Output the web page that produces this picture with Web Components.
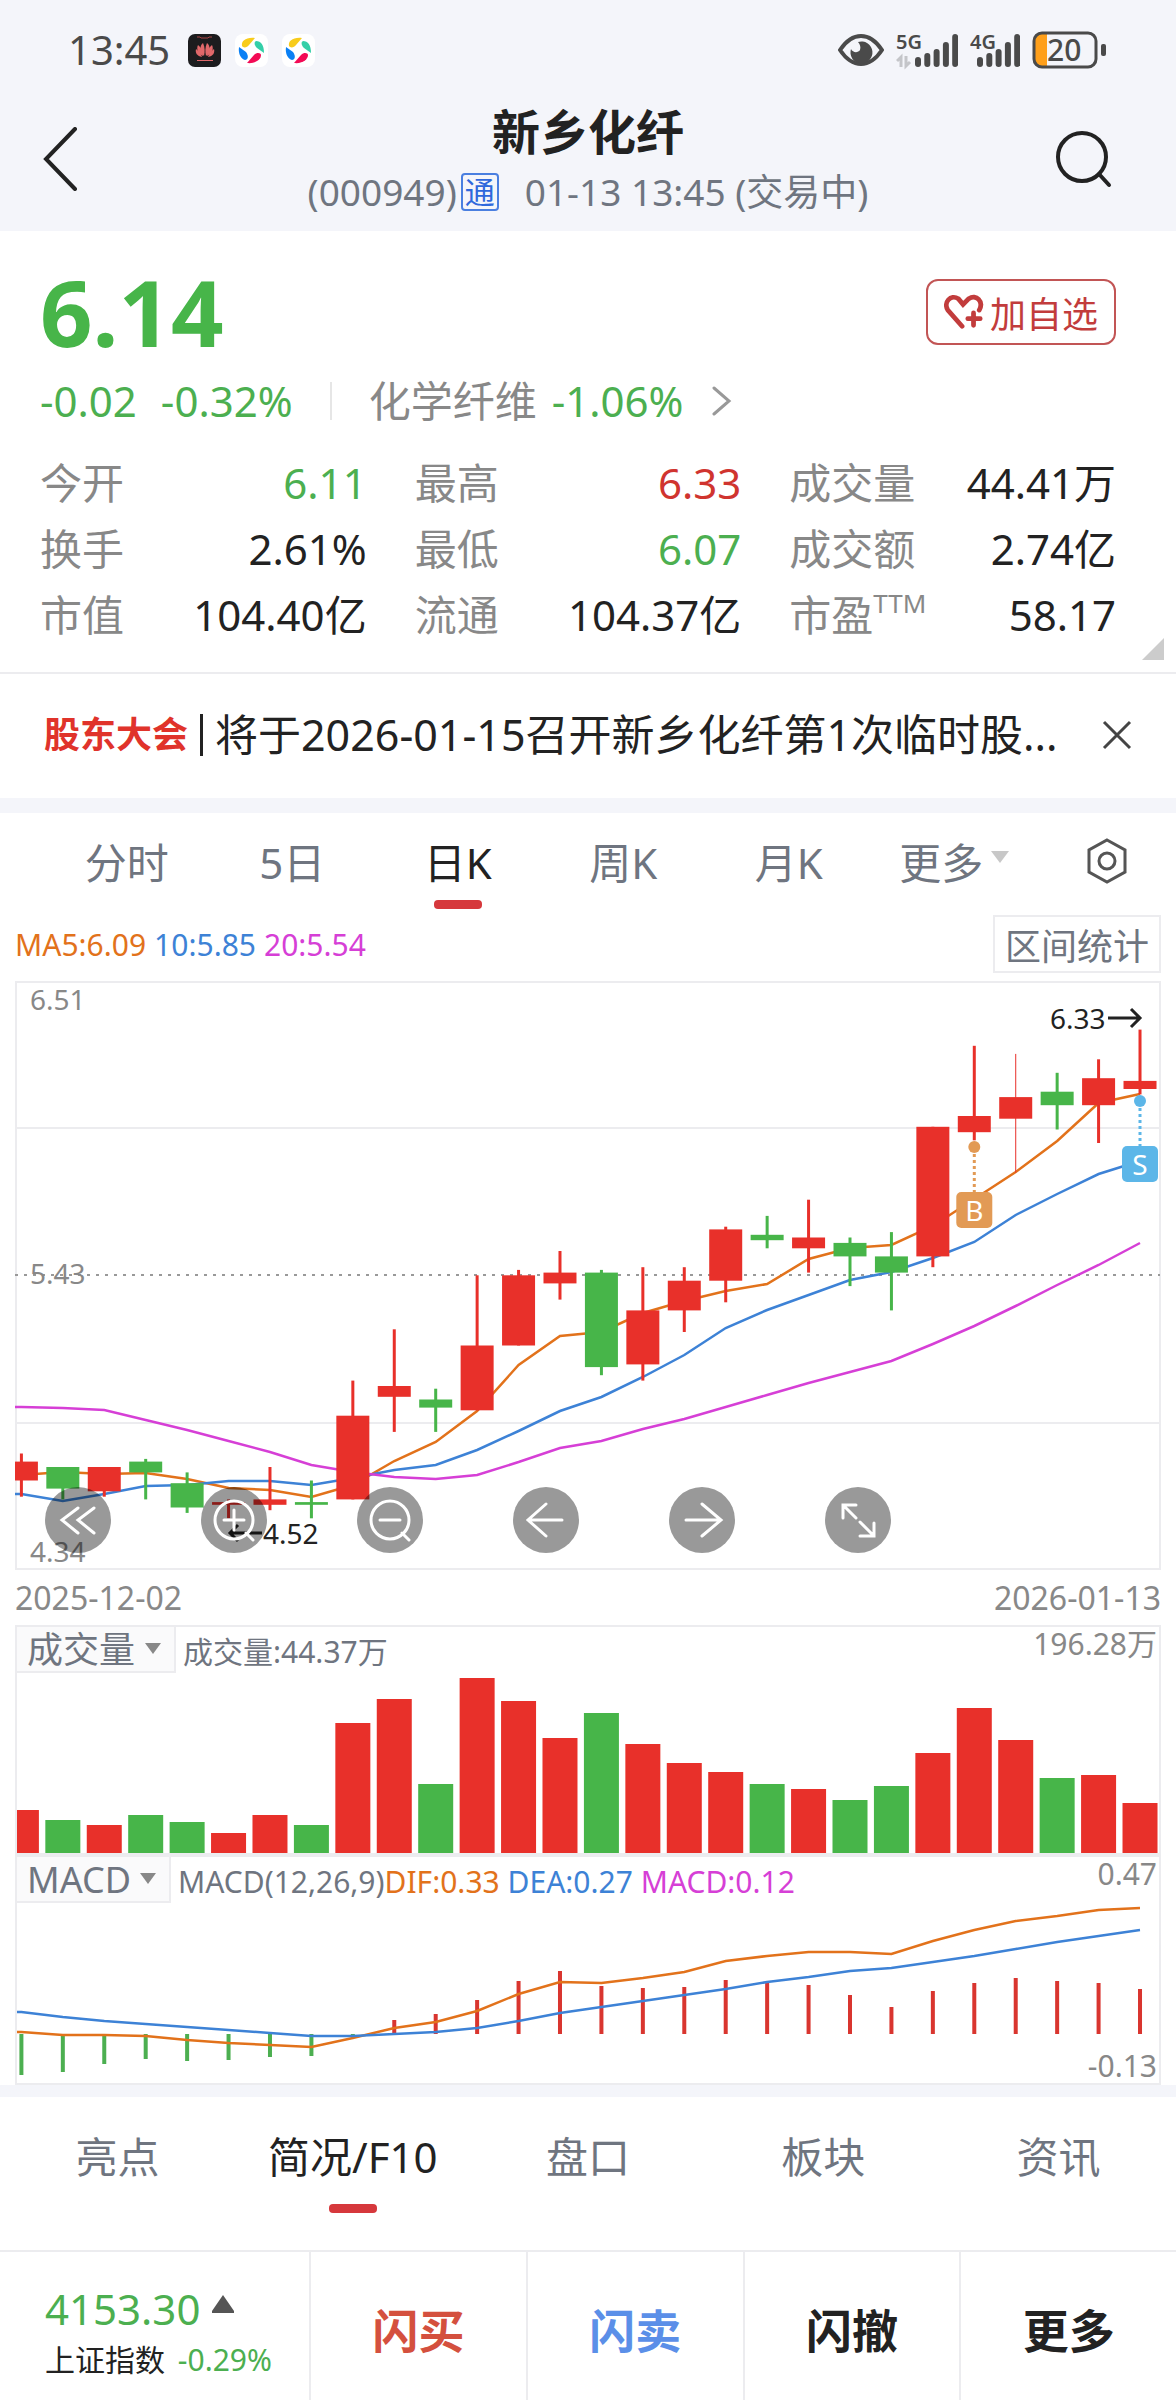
<!DOCTYPE html>
<html lang="zh-CN">
<head>
<meta charset="utf-8">
<meta name="viewport" content="width=device-width, initial-scale=1">
<title>新乡化纤 (000949)</title>
<style>
    :root {
        --ink: #222;
        --grey: #888;
        --slate: #6f7580;
        --line: #ececef;
        --band: #f4f5fa;
        --up: #e8302a;
        --down: #47b549;
        --ma5: #e2721b;
        --ma10: #3d82d6;
        --ma20: #d63fd6;
    }

    body {
        margin: 0;
        background: #fff;
        color: var(--ink);
        font-family: "Noto Sans", "Noto Sans CJK SC", sans-serif;
    }
</style>
</head>
<body>
<stock-page></stock-page>

<script>
const RESET = `
    *, *::before, *::after { box-sizing: border-box; }
    button, select { margin: 0; padding: 0; border: 0; background: none; color: inherit; font: inherit; }
    a { color: inherit; text-decoration: none; }
    svg { display: block; flex: none; }
`;

/**
 * Shared base: opens the shadow root and fills it with styles and markup.
 */
class BaseElement extends HTMLElement {
    constructor() {
        super();
        this.attachShadow({ mode: 'open' });
    }

    connectedCallback() {
        this.shadowRoot.innerHTML = `<style>${RESET}${this.styles}</style>${this.template}`;
    }
}

/**
 * System status bar: clock, running apps, signal and battery.
 */
class StatusBar extends BaseElement {
    bars(x) {
        return [10, 14, 18, 25, 33].map((h, i) =>
            `<rect x="${x + i * 9.3}" y="${34 - h}" width="6" height="${h}" rx="3"/>`).join('');
    }

    get browserIcon() {
        return `
            <svg width="33" height="33" viewBox="0 0 33 33">
                <rect width="33" height="33" rx="8" fill="#fff"/>
                <path fill="#f8cc1b" d="M7 12 C6 7 11 3 20 4 L14 11 C12 14 8 14 7 12Z"/>
                <path fill="#34cfa8" d="M21 7 C26 7 29 11 29 19 L22 14 C19 11 19 8 21 7Z"/>
                <path fill="#0a80f5" d="M4 13 L11 18 C14 22 13 26 10 26 C6 25 3 20 4 13Z"/>
                <path fill="#f30b55" d="M12 29 L19 21 C22 18 26 19 26 21 C26 25 21 30 12 29Z"/>
            </svg>`;
    }

    get template() {
        return `
            <time>13:45</time>
            <div class="apps">
                <svg width="33" height="33" viewBox="0 0 33 33">
                    <rect width="33" height="33" rx="7" fill="#1c1c1e"/>
                    <path d="M9 3h3l1 1h7l1-1h3" fill="none" stroke="#a44" stroke-width="1"/>
                    <g fill="#e0686a">
                        <path d="M16 22C12 18 11 12 15 9C17 13 17 18 16 22Z"/>
                        <path d="M18 22C22 18 23 12 19 9C17 13 17 18 18 22Z"/>
                        <path d="M15 22C10 20 8 15 10 11C13 13 15 18 15 22Z"/>
                        <path d="M19 22C24 20 26 15 24 11C21 13 19 18 19 22Z"/>
                        <path d="M14 23C9 22 7 19 8 15C11 17 13 20 14 23Z"/>
                        <path d="M20 23C25 22 27 19 26 15C23 17 21 20 20 23Z"/>
                        <path d="M9 26h16v1h-16z"/>
                    </g>
                </svg>
                ${this.browserIcon}
                ${this.browserIcon}
            </div>
            <svg width="46" height="34" viewBox="0 0 46 34">
                <path d="M2 17C8 8 15 3 23 3C31 3 38 8 44 17C38 26 31 31 23 31C15 31 8 26 2 17Z" fill="none" stroke="#4a4a4a" stroke-width="4"/>
                <path d="M20 9A11 11 0 1 1 13 16C15 20 20 20 22 17C23 14 22 11 20 9Z" fill="#4a4a4a"/>
            </svg>
            <svg class="net" width="62" height="50" viewBox="0 -8 62 50">
                <text x="0" y="16">5G</text>
                <g fill="#4a4a4a">${this.bars(19)}</g>
                <path d="M1 28l4-4v10" fill="none" stroke="#c4c5c9" stroke-width="3"/>
                <path d="M10 23v10l4-4" fill="none" stroke="#c4c5c9" stroke-width="3"/>
            </svg>
            <svg class="net" width="50" height="50" viewBox="0 -8 50 50">
                <text x="0" y="16">4G</text>
                <g fill="#4a4a4a">${this.bars(7)}</g>
            </svg>
            <svg class="battery" width="74" height="54" viewBox="0 -8 74 54">
                <path d="M10 2h5v34h-5a8 8 0 0 1-8-8v-18a8 8 0 0 1 8-8z" fill="#ff9f1a"/>
                <rect x="2" y="2" width="62" height="34" rx="8" fill="none" stroke="#4a4a4a" stroke-width="3"/>
                <rect x="69" y="13" width="5" height="12" rx="2" fill="#4a4a4a"/>
                <text x="15" y="30">20</text>
            </svg>
        `;
    }

    get styles() {
        return `
            :host {
                display: flex;
                align-items: center;
                gap: 12px;
                height: 100px;
                padding: 0 70px 0 68px;
                color: #4a4a4a;
            }
            time { font-size: 40px; line-height: 60px; }
            .apps { flex: 1; display: flex; gap: 14px; padding-left: 6px; }
            text { fill: #4a4a4a; font-weight: 500; }
            .net text { font-size: 20px; font-weight: 600; }
            .battery text { font-size: 30px; }
        `;
    }
}
customElements.define('status-bar', StatusBar);

/**
 * Title bar with back and search buttons; the name and code lines are slotted.
 */
class StockHeader extends BaseElement {
    get template() {
        return `
            <button aria-label="返回">
                <svg width="40" height="64" viewBox="0 0 40 64"><path d="M33 2L4 32L33 62"/></svg>
            </button>
            <div class="titles">
                <h1><slot name="name"></slot></h1>
                <p><span><slot name="code"></slot><b>通</b></span><slot name="time"></slot></p>
            </div>
            <button aria-label="搜索">
                <svg width="60" height="60" viewBox="0 0 60 60"><circle cx="28" cy="28" r="24"/><path d="M45 45L55 56"/></svg>
            </button>
        `;
    }

    get styles() {
        return `
            :host {
                display: flex;
                align-items: center;
                justify-content: space-between;
                padding: 2px 42px 9px;
            }
            button { width: 80px; padding-bottom: 6px; }
            path, circle { fill: none; stroke: var(--ink); stroke-width: 4; stroke-linecap: round; }
            .titles { text-align: center; }
            h1 { margin: 0; font-size: 48px; line-height: 60px; }
            p {
                display: flex;
                justify-content: center;
                gap: 26px;
                margin: 0;
                color: var(--slate);
                font-size: 37px;
                line-height: 60px;
            }
            p span { display: flex; align-items: center; gap: 4px; }
            b {
                width: 38px;
                border: 2px solid #4a7fe0;
                border-radius: 4px;
                color: #2f68dc;
                font-size: 30px;
                font-weight: 400;
                line-height: 34px;
            }
        `;
    }
}
customElements.define('stock-header', StockHeader);

/**
 * One label / value pair of the quote grid.
 */
class QuoteItem extends BaseElement {
    get template() {
        return `<span class="label">${this.getAttribute('label')}<sup>${this.getAttribute('note') || ''}</sup></span><slot></slot>`;
    }

    get styles() {
        return `
            :host {
                display: flex;
                justify-content: space-between;
                font-size: 42px;
                line-height: 66px;
            }
            :host([trend="up"]) { color: #d0342f; }
            :host([trend="down"]) { color: #4caf50; }
            .label { display: flex; color: var(--grey); }
            sup { font-size: 26px; line-height: 42px; vertical-align: baseline; }
        `;
    }
}
customElements.define('quote-item', QuoteItem);

/**
 * Latest price, change, industry and the slotted quote grid.
 */
class StockQuote extends BaseElement {
    get template() {
        return `
            <div class="top">
                <strong>6.14</strong>
                <button>
                    <svg width="40" height="36" viewBox="0 0 42 36">
                        <path d="M19 33L4 16C-1 8 7 -1 15 4L20 10L26 4C34 -1 42 7 37 16M31 19v13M25 25h13"/>
                    </svg>加自选
                </button>
            </div>
            <div class="change">
                <span>-0.02</span><span>-0.32%</span><i></i>
                <a href="#industry"><em>化学纤维</em> -1.06%
                    <svg width="20" height="32" viewBox="0 0 20 32"><path d="M2 3L17 16L2 29"/></svg>
                </a>
            </div>
            <div class="grid"><slot></slot></div>
            <svg class="corner" width="22" height="22" viewBox="0 0 22 22"><path d="M22 0V22H0Z"/></svg>
        `;
    }

    get styles() {
        return `
            :host {
                display: block;
                position: relative;
                padding: 30px 60px 24px 40px;
                border-bottom: 2px solid var(--line);
                background: #fff;
            }
            .top { display: flex; align-items: center; justify-content: space-between; }
            strong { color: var(--down); font-size: 92px; line-height: 102px; }
            button {
                display: flex;
                align-items: center;
                gap: 6px;
                height: 66px;
                padding: 0 16px;
                border: 2px solid #c25555;
                border-radius: 12px;
                color: #c23c3c;
                font-size: 36px;
            }
            button path { fill: none; stroke: #c23c3c; stroke-width: 5; stroke-linecap: round; }
            .change {
                display: flex;
                align-items: center;
                gap: 24px;
                height: 76px;
                color: #4caf50;
                font-size: 42px;
                line-height: 60px;
            }
            i { width: 2px; height: 38px; margin: 0 13px; background: #e6e6e6; }
            a { display: flex; align-items: center; gap: 15px; }
            a path { fill: none; stroke: #999; stroke-width: 3; stroke-linecap: round; }
            a svg { margin-left: 14px; }
            em { color: var(--grey); font-style: normal; }
            .grid {
                display: grid;
                grid-template-columns: repeat(3, 1fr);
                column-gap: 48px;
                padding-top: 11px;
            }
            .corner { position: absolute; right: 12px; bottom: 12px; fill: #ccc; }
        `;
    }
}
customElements.define('stock-quote', StockQuote);

class NoticeBar extends BaseElement {
    get template() {
        return `
            <b><slot name="tag"></slot></b>
            <a href="#notice"><slot></slot></a>
            <button aria-label="关闭">
                <svg width="30" height="30" viewBox="0 0 30 30"><path d="M2 2L28 28M28 2L2 28" stroke="#444" stroke-width="3"/></svg>
            </button>
        `;
    }

    get styles() {
        return `
            :host {
                display: flex;
                align-items: center;
                height: 124px;
                padding: 0 44px 2px;
                background: #fff;
            }
            b { padding-right: 12px; color: #e0332b; font-size: 36px; line-height: 42px; }
            a {
                flex: 1;
                padding-left: 12px;
                border-left: 3px solid var(--ink);
                font-size: 43px;
                line-height: 42px;
                white-space: nowrap;
            }
            button { height: 30px; }
        `;
    }
}
customElements.define('notice-bar', NoticeBar);

/**
 * A tab; the active one gets the red bar, "menu" adds a small triangle.
 */
class TabItem extends BaseElement {
    get template() {
        const menu = this.hasAttribute('menu')
            ? '<svg width="18" height="12" viewBox="0 0 18 12"><path d="M0 0H18L9 12Z" fill="#c8c8c8"/></svg>' : '';
        return `<button role="tab" aria-selected="${this.hasAttribute('active')}"><slot></slot>${menu}</button>`;
    }

    get styles() {
        return `
            :host { flex: 1; display: flex; justify-content: center; color: var(--slate); font-size: 42px; }
            :host([active]) { color: var(--ink); }
            button {
                display: flex;
                align-items: center;
                gap: 8px;
                position: relative;
                line-height: 60px;
                white-space: nowrap;
            }
            :host([active]) button::after {
                content: "";
                position: absolute;
                left: calc(50% - 24px);
                bottom: 4px;
                width: 48px;
                height: 9px;
                border-radius: 4px;
                background: #d6383c;
            }
            svg { margin-bottom: 12px; }
        `;
    }
}
customElements.define('tab-item', TabItem);

const STEP = 41.43;
const FIRST = 6.4;
const WIDTH = 1146;
const slotX = (i) => FIRST + STEP * i;

// [body top, body bottom, high, low, rising]
const CANDLES = [
    [4.73, 4.66, 4.76, 4.60, 1], [4.71, 4.63, 4.71, 4.59, 0], [4.71, 4.62, 4.71, 4.60, 1],
    [4.73, 4.69, 4.74, 4.59, 0], [4.65, 4.56, 4.69, 4.54, 0], [4.58, 4.57, 4.59, 4.52, 1],
    [4.59, 4.57, 4.71, 4.55, 1], [4.58, 4.57, 4.66, 4.52, 0], [4.90, 4.59, 5.03, 4.59, 1],
    [5.01, 4.97, 5.22, 4.84, 1], [4.96, 4.93, 5.00, 4.84, 0], [5.16, 4.92, 5.42, 4.92, 1],
    [5.42, 5.16, 5.44, 5.16, 1], [5.43, 5.39, 5.51, 5.33, 1], [5.43, 5.08, 5.44, 5.05, 0],
    [5.29, 5.09, 5.45, 5.03, 1], [5.40, 5.29, 5.45, 5.21, 1], [5.59, 5.40, 5.60, 5.32, 1],
    [5.57, 5.55, 5.64, 5.52, 0], [5.56, 5.52, 5.70, 5.43, 1], [5.54, 5.49, 5.56, 5.38, 0],
    [5.49, 5.43, 5.58, 5.29, 0], [5.97, 5.49, 5.97, 5.45, 1], [6.01, 5.95, 6.27, 5.92, 1],
    [6.08, 6.00, 6.24, 5.80, 1], [6.10, 6.05, 6.17, 5.96, 0], [6.15, 6.05, 6.22, 5.91, 1],
    [6.14, 6.11, 6.33, 6.09, 1],
];

const VOLUMES = [45, 35, 30, 40, 33, 22, 40, 30, 132, 156, 71, 177, 154, 117, 142, 111, 92, 83, 71, 66, 55, 69, 102, 147, 115, 77, 80, 52];

const MA5 = [494, 491, 493, 492, 498, 507, 509, 516, 504, 480, 461, 430, 384, 355, 351, 332, 320, 310, 303, 278, 267, 264, 245, 218, 191, 160, 122, 113];
const MA10 = [513, 520, 513, 505, 504, 500, 500, 504, 497, 489, 484, 469, 450, 430, 416, 396, 374, 347, 329, 314, 299, 291, 277, 261, 234, 213, 193, 180];
const MA20 = [426, 427, 429, 439, 449, 460, 471, 484, 491, 496, 498, 494, 481, 467, 460, 448, 438, 426, 414, 402, 391, 380, 363, 345, 325, 304, 284, 262];

const MACD = [220, 217, 209, 204, 206, 205, 202, 201, 181, 165, 159, 145, 126, 116, 131, 133, 132, 125, 127, 130, 140, 152, 136, 128, 123, 126, 128, 134];
const DIF = [177, 180, 180, 181, 185, 188, 190, 192, 183, 173, 167, 156, 139, 127, 128, 123, 117, 106, 101, 97, 97, 99, 86, 75, 66, 61, 55, 53];
const DEA = [157, 162, 166, 169, 172, 175, 178, 181, 181, 179, 177, 173, 166, 158, 152, 146, 140, 134, 127, 122, 116, 113, 107, 101, 94, 87, 81, 75];

function polyline(values, name) {
    const points = values.map((y, i) => `${slotX(i).toFixed(1)},${y}`);
    return `<polyline class="curve" stroke="var(--${name})" points="0,${values[0]} ${points.join(' ')}"/>`;
}

/**
 * Daily candlestick chart with moving averages, trade marks and zoom controls.
 */
class KlineChart extends BaseElement {
    priceY(price) {
        return (6.51 - price) * 270;
    }

    get candles() {
        return CANDLES.map(([top, bottom, high, low, rising], i) => {
            const x = slotX(i);
            const y = this.priceY(top);
            const wick = i === 24 ? 1 : 3;
            return `
                <g fill="var(${rising ? '--up' : '--down'})">
                    <rect x="${x - wick / 2}" y="${this.priceY(high)}" width="${wick}" height="${this.priceY(low) - this.priceY(high)}"/>
                    <rect x="${x - 16.5}" y="${y}" width="33" height="${this.priceY(bottom) - y}"/>
                </g>`;
        }).join('');
    }

    mark(letter, i, y, colour) {
        const x = slotX(i);
        return `
            <g fill="${colour}">
                <circle cx="${x}" cy="${y}" r="6"/>
                <path d="M${x} ${y + 7}V${y + 46}" stroke="${colour}" stroke-width="3" stroke-dasharray="3 3"/>
                <rect x="${x - 18}" y="${y + 45}" width="36" height="36" rx="5"/>
                <text class="letter" x="${x}" y="${y + 74}">${letter}</text>
            </g>`;
    }

    control(name, path) {
        return `<button aria-label="${name}"><svg width="66" height="66" viewBox="0 0 66 66">${path}</svg></button>`;
    }

    get template() {
        return `
            <svg class="plot" viewBox="0 0 ${WIDTH} 589">
                <path class="grid" d="M1 1H1145V588H1Z M1 147H1145 M1 442H1145"/>
                <path class="mid" d="M0 294H1145"/>
                <text x="15" y="29">6.51</text>
                <text x="15" y="303">5.43</text>
                <text x="15" y="581">4.34</text>
                ${polyline(MA5, 'ma5')}${polyline(MA10, 'ma10')}${polyline(MA20, 'ma20')}
                ${this.candles}
                ${this.mark('B', 23, 166, '#e29a55')}
                ${this.mark('S', 27, 120, '#5cb6e8')}
                <text class="peak" x="248" y="563">4.52</text>
                <path class="arrow" d="M247 552H215M223 544L215 552L223 560"/>
                <text class="peak" x="1035" y="48">6.33</text>
                <path class="arrow" d="M1093 37H1125M1116 28L1125 37L1116 46"/>
            </svg>
            <div class="controls">
                ${this.control('最早', '<path d="M33 21L17 33L33 46M49 21L33 33L49 46"/>')}
                ${this.control('放大', '<circle cx="33" cy="33" r="19"/><path d="M23 33H43M33 23V43M45 46L52 53"/>')}
                ${this.control('缩小', '<circle cx="33" cy="33" r="19"/><path d="M23 33H43M45 46L52 53"/>')}
                ${this.control('左移', '<path d="M49 33H15M33 17L15 33L33 49"/>')}
                ${this.control('右移', '<path d="M17 33H51M33 17L52 33L33 49"/>')}
                ${this.control('全屏', '<path d="M31 18H18V31M18 18L31 31M35 49H49V36M49 49L35 35"/>')}
            </div>
        `;
    }

    get styles() {
        return `
            :host { display: block; position: relative; }
            .plot { width: 100%; height: auto; }
            .grid { fill: none; stroke: var(--line); stroke-width: 2; }
            .mid { stroke: #999; stroke-width: 2; stroke-dasharray: 3 6; }
            .curve { fill: none; stroke-width: 2.5; }
            text { fill: var(--grey); font-size: 28px; }
            .peak { fill: var(--ink); }
            .letter { fill: #fff; text-anchor: middle; }
            .arrow { fill: none; stroke: var(--ink); stroke-width: 3; }
            .controls { position: absolute; left: 30px; bottom: 17px; display: flex; gap: 90px; }
            button { border-radius: 50%; background: rgba(0, 0, 0, 0.4); }
            button path, button circle { fill: none; stroke: #fff; stroke-width: 3; stroke-linecap: round; }
        `;
    }
}
customElements.define('kline-chart', KlineChart);

/**
 * Sub chart under the candles. The "kind" attribute picks volume or MACD,
 * the legend is slotted.
 */
class IndicatorPanel extends BaseElement {
    get volumePlot() {
        return VOLUMES.map((h, i) =>
            `<rect x="${slotX(i) - 17.5}" y="${184 - h}" width="35" height="${h}" fill="var(${CANDLES[i][4] ? '--up' : '--down'})"/>`).join('');
    }

    get macdPlot() {
        const bars = MACD.map((y, i) => {
            const top = Math.min(y, 179);
            return `<rect x="${slotX(i) - 2}" y="${top}" width="4" height="${Math.abs(y - 179)}" fill="${y < 179 ? '#d9352f' : '#4caf50'}"/>`;
        }).join('');
        return `${bars}${polyline(DIF, 'ma5')}${polyline(DEA, 'ma10')}<text x="1142" y="222">-0.13</text>`;
    }

    get template() {
        const macd = this.getAttribute('kind') === 'macd';
        return `
            <div class="head">
                <label>
                    <select aria-label="指标"><option>${macd ? 'MACD' : '成交量'}</option></select>
                </label>
                <div class="legend"><slot></slot></div>
                <span class="max">${this.getAttribute('max')}</span>
            </div>
            <svg class="plot" viewBox="0 ${macd ? 46 : 0} ${WIDTH} 184">${macd ? this.macdPlot : this.volumePlot}</svg>
        `;
    }

    get styles() {
        return `
            :host { display: block; outline: 2px solid var(--line); outline-offset: -2px; }
            .head { display: flex; height: 46px; }
            label { position: relative; height: 48px; border: 2px solid var(--line); background: #fafafb; color: var(--slate); }
            label::after {
                content: "";
                position: absolute;
                right: 13px;
                top: 16px;
                border: 8px solid transparent;
                border-top: 11px solid #888;
                border-bottom: 0;
                pointer-events: none;
            }
            select { appearance: none; height: 46px; padding: 0 38px 0 10px; font-size: 36px; line-height: 46px; }
            .legend {
                flex: 1;
                padding: 8px 0 0 7px;
                color: var(--slate);
                font-size: 30px;
                line-height: 38px;
                white-space: pre;
            }
            .max { padding-right: 4px; color: var(--grey); font-size: 30px; line-height: 38px; }
            .plot { width: 100%; height: auto; }
            .curve { fill: none; stroke-width: 2.5; }
            text { fill: var(--grey); font-size: 30px; text-anchor: end; }
        `;
    }
}
customElements.define('indicator-panel', IndicatorPanel);

/**
 * Trading bar: index summary and four actions.
 */
class TradeBar extends BaseElement {
    get template() {
        return `
            <a href="#index">
                <span class="index">4153.30
                    <svg width="22" height="18" viewBox="0 0 22 18"><path d="M11 0L22 16V18H0V16Z" fill="#555"/></svg>
                </span>
                <span class="name">上证指数 <em>-0.29%</em></span>
            </a>
            <button class="buy">闪买</button>
            <button class="sell">闪卖</button>
            <button>闪撤</button>
            <button>更多</button>
        `;
    }

    get styles() {
        return `
            :host {
                display: grid;
                grid-template-columns: 309px repeat(4, 1fr);
                height: 150px;
                border-top: 2px solid var(--line);
            }
            a { padding: 29px 0 0 45px; }
            .index { display: flex; align-items: center; gap: 12px; color: #4caf50; font-size: 42px; line-height: 56px; }
            .index svg { margin-bottom: 10px; }
            .name { font-size: 30px; line-height: 46px; }
            em { margin-left: 5px; color: #4caf50; font-style: normal; }
            button { padding-top: 4px; border-left: 2px solid var(--line); font-size: 46px; font-weight: 700; }
            .buy { color: #d4503e; }
            .sell { color: #5b8fe8; }
        `;
    }
}
customElements.define('trade-bar', TradeBar);

/**
 * The whole stock detail page.
 */
class StockPage extends BaseElement {
    get template() {
        return `
            <header>
                <status-bar></status-bar>
                <stock-header>
                    <span slot="name">新乡化纤</span>
                    <span slot="code">(000949)</span>
                    <span slot="time">01-13 13:45 (交易中)</span>
                </stock-header>
            </header>
            <stock-quote>
                <quote-item label="今开" trend="down">6.11</quote-item>
                <quote-item label="最高" trend="up">6.33</quote-item>
                <quote-item label="成交量">44.41万</quote-item>
                <quote-item label="换手">2.61%</quote-item>
                <quote-item label="最低" trend="down">6.07</quote-item>
                <quote-item label="成交额">2.74亿</quote-item>
                <quote-item label="市值">104.40亿</quote-item>
                <quote-item label="流通">104.37亿</quote-item>
                <quote-item label="市盈" note="TTM">58.17</quote-item>
            </stock-quote>
            <notice-bar><span slot="tag">股东大会</span>将于2026-01-15召开新乡化纤第1次临时股...</notice-bar>
            <hr>
            <nav class="periods" role="tablist">
                <tab-item>分时</tab-item>
                <tab-item>5日</tab-item>
                <tab-item active>日K</tab-item>
                <tab-item>周K</tab-item>
                <tab-item>月K</tab-item>
                <tab-item menu>更多</tab-item>
                <button class="settings" aria-label="设置">
                    <svg width="42" height="46" viewBox="0 0 42 46">
                        <path d="M21 2L39 12V34L21 44L3 34V12Z"/><circle cx="21" cy="23" r="8"/>
                    </svg>
                </button>
            </nav>
            <main>
                <div class="averages">
                    <span class="ma5">MA5:6.09</span>
                    <span class="ma10">10:5.85</span>
                    <span class="ma20">20:5.54</span>
                    <button>区间统计</button>
                </div>
                <kline-chart></kline-chart>
                <div class="dates"><time>2025-12-02</time><time>2026-01-13</time></div>
                <indicator-panel kind="volume" max="196.28万">成交量:44.37万</indicator-panel>
                <indicator-panel kind="macd" max="0.47">MACD(12,26,9)<span class="ma5">DIF:0.33</span> <span class="ma10">DEA:0.27</span> <span class="ma20">MACD:0.12</span></indicator-panel>
            </main>
            <hr class="thin">
            <nav class="sections" role="tablist">
                <tab-item>亮点</tab-item>
                <tab-item active>简况/F10</tab-item>
                <tab-item>盘口</tab-item>
                <tab-item>板块</tab-item>
                <tab-item>资讯</tab-item>
            </nav>
            <trade-bar></trade-bar>
        `;
    }

    get styles() {
        return `
            :host { display: block; }
            header { background: var(--band); }
            hr { height: 15px; margin: 0; border: 0; background: var(--band); }
            hr.thin { height: 12px; }
            nav { display: flex; }
            .periods { height: 100px; padding-left: 44px; }
            .settings { display: grid; place-items: center; width: 139px; padding-bottom: 4px; }
            .settings path, .settings circle { fill: none; stroke: #555; stroke-width: 3; }
            main { padding: 0 15px; }
            .averages { display: flex; align-items: center; gap: 8px; height: 68px; padding-bottom: 6px; font-size: 30px; }
            .averages button {
                height: 58px;
                margin-left: auto;
                padding: 0 10px;
                border: 2px solid var(--line);
                color: var(--slate);
                font-size: 36px;
            }
            .ma5 { color: var(--ma5); }
            .ma10 { color: var(--ma10); }
            .ma20 { color: var(--ma20); }
            .dates {
                display: flex;
                justify-content: space-between;
                color: var(--grey);
                font-size: 32px;
                line-height: 55px;
            }
            .sections { height: 153px; padding-bottom: 33px; }
        `;
    }
}
customElements.define('stock-page', StockPage);
</script>
</body>
</html>
